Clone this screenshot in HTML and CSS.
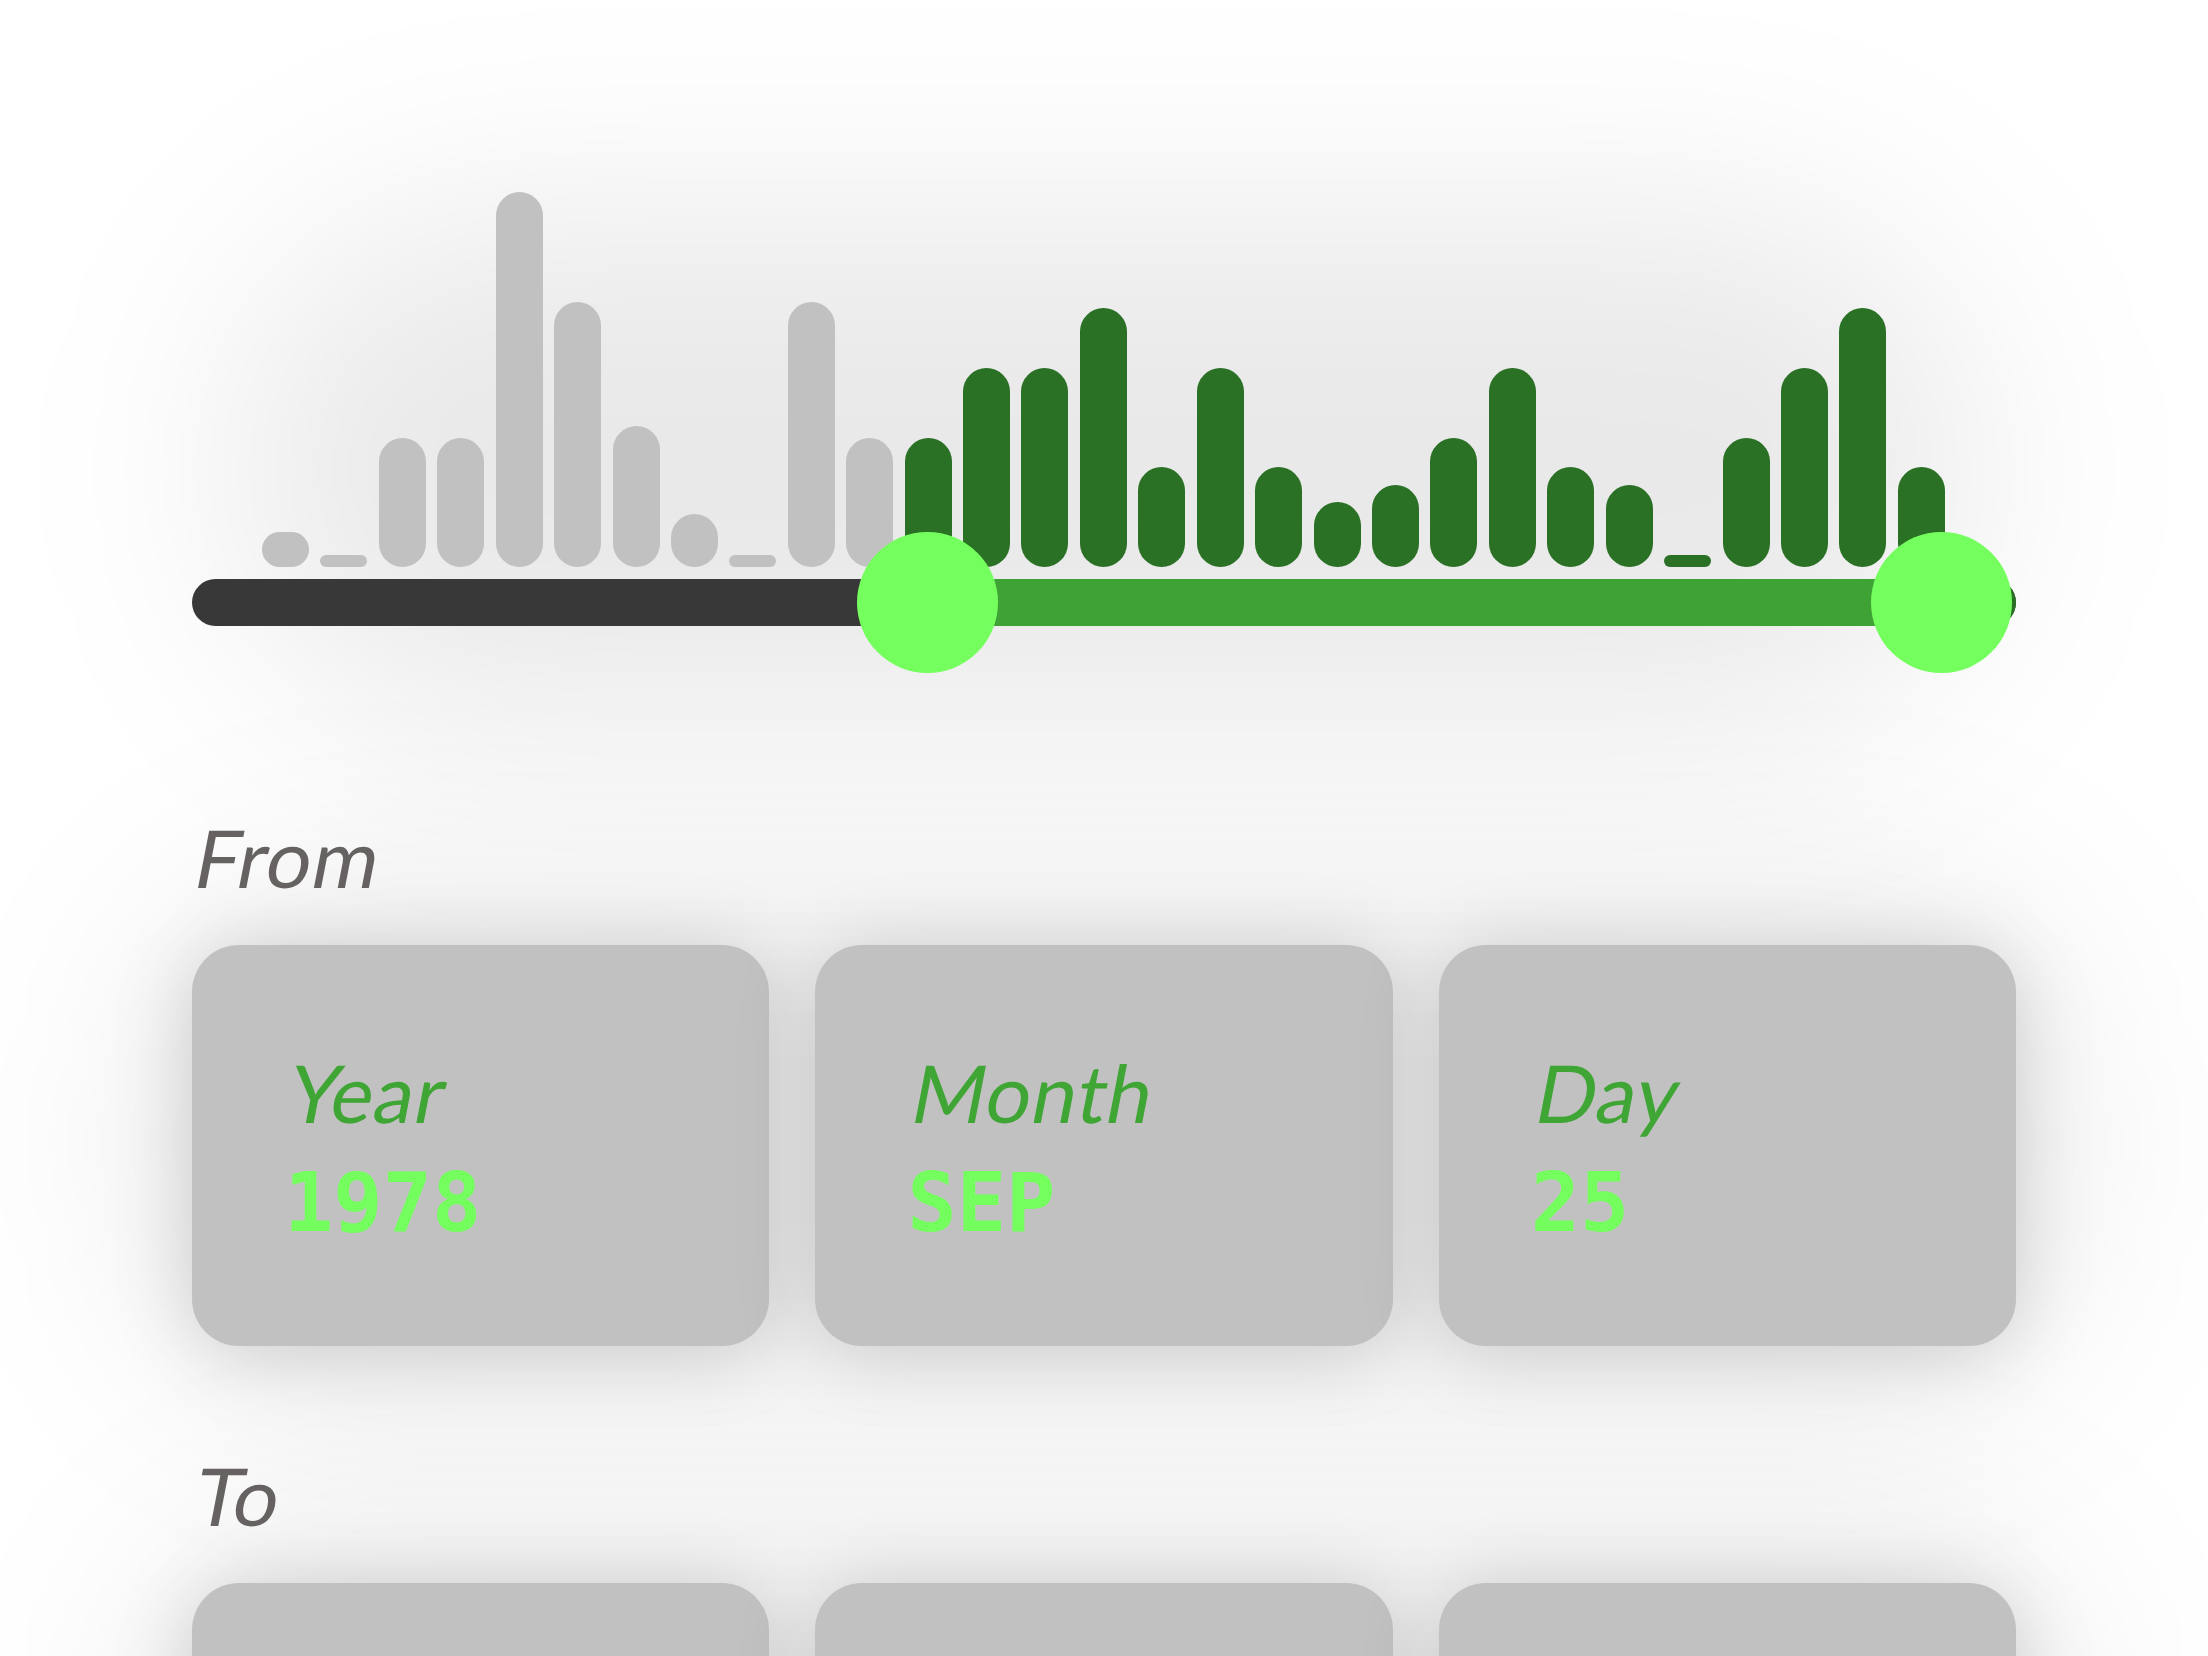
FILE: index.html
```html
<!DOCTYPE html>
<html lang="en">
<head>
<meta charset="utf-8">
<title>Date range</title>
<link rel="stylesheet" href="styles.css">
</head>
<body>
<main class="page">
  <section class="range">
    <div class="histogram">
      <span class="bar" style="height:35px"></span>
      <span class="bar" style="height:12px"></span>
      <span class="bar" style="height:129px"></span>
      <span class="bar" style="height:129px"></span>
      <span class="bar" style="height:375px"></span>
      <span class="bar" style="height:265px"></span>
      <span class="bar" style="height:141px"></span>
      <span class="bar" style="height:53px"></span>
      <span class="bar" style="height:12px"></span>
      <span class="bar" style="height:265px"></span>
      <span class="bar" style="height:129px"></span>
      <span class="bar on" style="height:129px"></span>
      <span class="bar on" style="height:199px"></span>
      <span class="bar on" style="height:199px"></span>
      <span class="bar on" style="height:259px"></span>
      <span class="bar on" style="height:100px"></span>
      <span class="bar on" style="height:199px"></span>
      <span class="bar on" style="height:100px"></span>
      <span class="bar on" style="height:65px"></span>
      <span class="bar on" style="height:82px"></span>
      <span class="bar on" style="height:129px"></span>
      <span class="bar on" style="height:199px"></span>
      <span class="bar on" style="height:100px"></span>
      <span class="bar on" style="height:82px"></span>
      <span class="bar on" style="height:12px"></span>
      <span class="bar on" style="height:129px"></span>
      <span class="bar on" style="height:199px"></span>
      <span class="bar on" style="height:259px"></span>
      <span class="bar on" style="height:100px"></span>
    </div>
    <div class="track">
      <div class="track-fill" style="left:40.35%;width:55.55%"></div>
      <div class="track-tail" style="left:95.9%"></div>
      <div class="knob" style="left:40.35%"></div>
      <div class="knob" style="left:95.9%"></div>
    </div>
  </section>

  <section class="group">
    <h2 class="group-title"><span class="slant">From</span></h2>
    <div class="fields">
      <div class="field">
        <div class="field-label"><span class="slant">Year</span></div>
        <div class="field-value">1978</div>
      </div>
      <div class="field">
        <div class="field-label"><span class="slant">Month</span></div>
        <div class="field-value">SEP</div>
      </div>
      <div class="field">
        <div class="field-label"><span class="slant">Day</span></div>
        <div class="field-value">25</div>
      </div>
    </div>
  </section>

  <section class="group group-to">
    <h2 class="group-title"><span class="slant">To</span></h2>
    <div class="fields">
      <div class="field">
        <div class="field-label"><span class="slant">Year</span></div>
        <div class="field-value">2018</div>
      </div>
      <div class="field">
        <div class="field-label"><span class="slant">Month</span></div>
        <div class="field-value">DEC</div>
      </div>
      <div class="field">
        <div class="field-label"><span class="slant">Day</span></div>
        <div class="field-value">31</div>
      </div>
    </div>
  </section>
</main>
</body>
</html>
```

FILE: styles.css
```css
html {
  margin: 0;
  padding: 0;
  background: #ffffff;
}

body {
  margin: 0;
  padding: 0;
  overflow: hidden;
}

.page {
  position: relative;
  z-index: 0;
  padding: 192px 192px 0;
  width: 1824px;
}

/* ---------- range chart ---------- */
.range {
  position: relative;
}

.range::before {
  content: "";
  position: absolute;
  left: 40px;
  right: 40px;
  top: 20px;
  bottom: -100px;
  border-radius: 300px;
  background: rgba(0, 0, 0, 0.085);
  filter: blur(110px);
  z-index: -1;
}

.histogram {
  display: flex;
  justify-content: space-between;
  align-items: flex-end;
  height: 375px;
  padding: 0 71px 0 70px;
}

.bar {
  display: block;
  width: 47px;
  border-radius: 24px;
  background: #c1c1c1;
}

.bar.on {
  background: #2a7025;
}

.track {
  position: relative;
  margin-top: 12px;
  height: 47px;
  border-radius: 24px;
  background: #383838;
}

.track-fill {
  position: absolute;
  top: 0;
  bottom: 0;
  background: #3fa235;
}

.track-tail {
  position: absolute;
  top: 0;
  bottom: 0;
  right: 0;
  background: #2a7025;
  border-radius: 0 24px 24px 0;
}

.knob {
  position: absolute;
  top: 50%;
  width: 141px;
  height: 141px;
  margin: -70.5px 0 0 -70.5px;
  border-radius: 50%;
  background: #75ff5f;
}

/* ---------- date groups ---------- */
.group {
  position: relative;
  margin-top: 191px;
}

.group::before {
  content: "";
  position: absolute;
  left: -60px;
  right: -60px;
  top: 60px;
  bottom: -60px;
  border-radius: 200px;
  background: rgba(0, 0, 0, 0.07);
  filter: blur(100px);
  z-index: -1;
}

.group-to {
  margin-top: 109px;
}

.slant {
  display: inline-block;
  transform: skewX(-11deg);
  transform-origin: 0 80%;
}

.group-title {
  margin: 0;
  font-family: "Lato", "Open Sans", sans-serif;
  font-style: normal;
  font-weight: 400;
  font-size: 80px;
  line-height: 80px;
  letter-spacing: 1px;
  color: #676262;
}

.fields {
  display: grid;
  grid-template-columns: repeat(3, 1fr);
  column-gap: 46px;
  margin-top: 48px;
}

.field {
  height: 401px;
  box-sizing: border-box;
  padding: 107px 92px 0;
  border-radius: 47px;
  background: #c1c1c1;
  box-shadow: 0 6px 80px rgba(0, 0, 0, 0.17);
}

.field-label {
  font-family: "Lato", "Open Sans", sans-serif;
  font-style: normal;
  font-weight: 400;
  font-size: 80px;
  line-height: 80px;
  letter-spacing: 1px;
  color: #3fa535;
  padding-left: 2px;
}

.field-value {
  margin-top: 30px;
  font-family: "DejaVu Sans Mono", "Liberation Mono", monospace;
  font-weight: 700;
  font-size: 82px;
  line-height: 82px;
  color: #74ff5e;
}
```
